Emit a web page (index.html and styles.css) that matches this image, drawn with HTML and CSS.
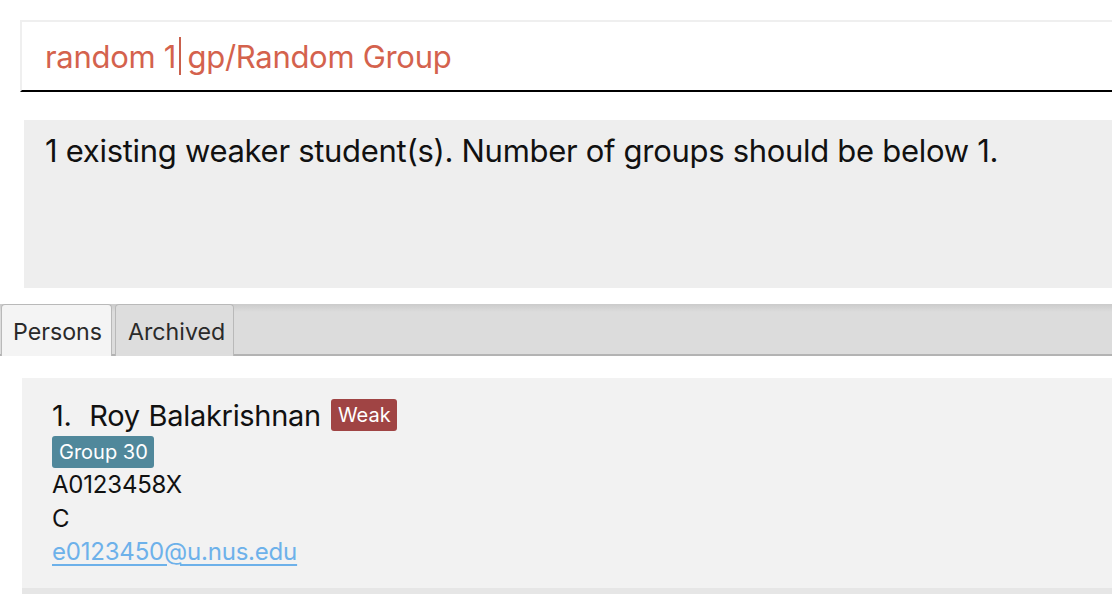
FILE: index.html
```html
<!DOCTYPE html>
<html>
<head>
<meta charset="utf-8">
<link rel="stylesheet" href="styles.css">
</head>
<body>
<div class="app">
  <div class="command-wrap">
    <div class="command-box"><span class="cmd">random 1</span><span class="caret"></span><span class="cmd">gp/Random Group</span></div>
  </div>
  <div class="result-wrap">
    <div class="result-box">1 existing weaker student(s). Number of groups should be below 1.</div>
  </div>
  <div class="tabbar">
    <div class="tab selected">Persons</div>
    <div class="tab">Archived</div>
  </div>
  <div class="list">
    <div class="card">
      <div class="name-row"><span class="name">1.&nbsp; Roy Balakrishnan</span><span class="badge weak">Weak</span></div>
      <div class="groups"><span class="badge group">Group 30</span></div>
      <div class="field">A0123458X</div>
      <div class="field">C</div>
      <div class="field"><a class="email" href="#">e0123450@u.nus.edu</a></div>
    </div>
    <div class="card-next"></div>
  </div>
</div>
</body>
</html>
```
FILE: styles.css
```css
html, body {
  margin: 0;
  padding: 0;
  background: #ffffff;
  font-family: Inter, "Noto Sans", sans-serif;
  overflow: hidden;
}
.app {
  width: 1112px;
  height: 594px;
  display: flex;
  flex-direction: column;
}
.command-wrap {
  padding: 20px 0 0 20px;
}
.command-box {
  border-top: 2px solid #efefef;
  border-left: 2px solid #efefef;
  border-bottom: 2px solid #000;
  display: flex;
  align-items: center;
  padding-left: 23px;
  box-sizing: border-box;
  height: 72px;
  font-size: 31px;
  color: #d4624d;
  letter-spacing: -0.3px;
}
.caret {
  display: inline-block;
  width: 1.5px;
  height: 38px;
  background: #c9604c;
  margin: 0 7px 0 3px;
}
.result-wrap {
  padding: 28px 0 0 24px;
}
.result-box {
  background: #eeeeee;
  height: 168px;
  box-sizing: border-box;
  padding: 12px 0 0 21px;
  font-size: 31px;
  color: #111;
  letter-spacing: -0.3px;
}
.tabbar {
  margin-top: 16px;
  height: 52px;
  box-sizing: border-box;
  background: linear-gradient(#cbcbcb, #dcdcdc 8px, #dcdcdc);
  border-bottom: 2px solid #b3b3b3;
  display: flex;
  align-items: flex-end;
  padding-left: 1px;
  gap: 3px;
}
.tab {
  box-sizing: border-box;
  border: 1px solid #b9b9b9;
  border-bottom: none;
  border-radius: 4px 4px 0 0;
  background: #dddddd;
  font-size: 23.2px;
  color: #2a2a2a;
  display: flex;
  align-items: center;
  padding: 2px 8px 0 12px;
  margin-bottom: -2px;
  height: 52px;
}
.tab.selected {
  background: #f4f4f4;
  padding: 2px 9px 0 11px;
}
.list {
  padding: 22px 0 0 22px;
  flex: 1;
}
.card {
  background: #f2f2f2;
  height: 210px;
  box-sizing: border-box;
  padding: 20px 0 0 30px;
}
.card-next {
  background: #e6e6e6;
  height: 10px;
}
.name-row {
  display: flex;
  align-items: center;
  gap: 10px;
  height: 34px;
}
.name {
  font-size: 29px;
  color: #111;
  letter-spacing: -0.3px;
  word-spacing: 1px;
}
.badge {
  display: inline-block;
  color: #fff;
  font-size: 20px;
  border-radius: 3px;
  padding: 2px 6px 2px 7px;
  line-height: 28px;
}
.weak {
  background: #a04444;
}
.groups {
  margin-top: 4px;
}
.group {
  background: #50889b;
}
.field {
  font-size: 24px;
  color: #111;
  line-height: 33.5px;
  letter-spacing: -0.2px;
}
.email {
  color: #6db1ea;
  text-decoration: underline;
  text-underline-offset: 4px;
}
```
